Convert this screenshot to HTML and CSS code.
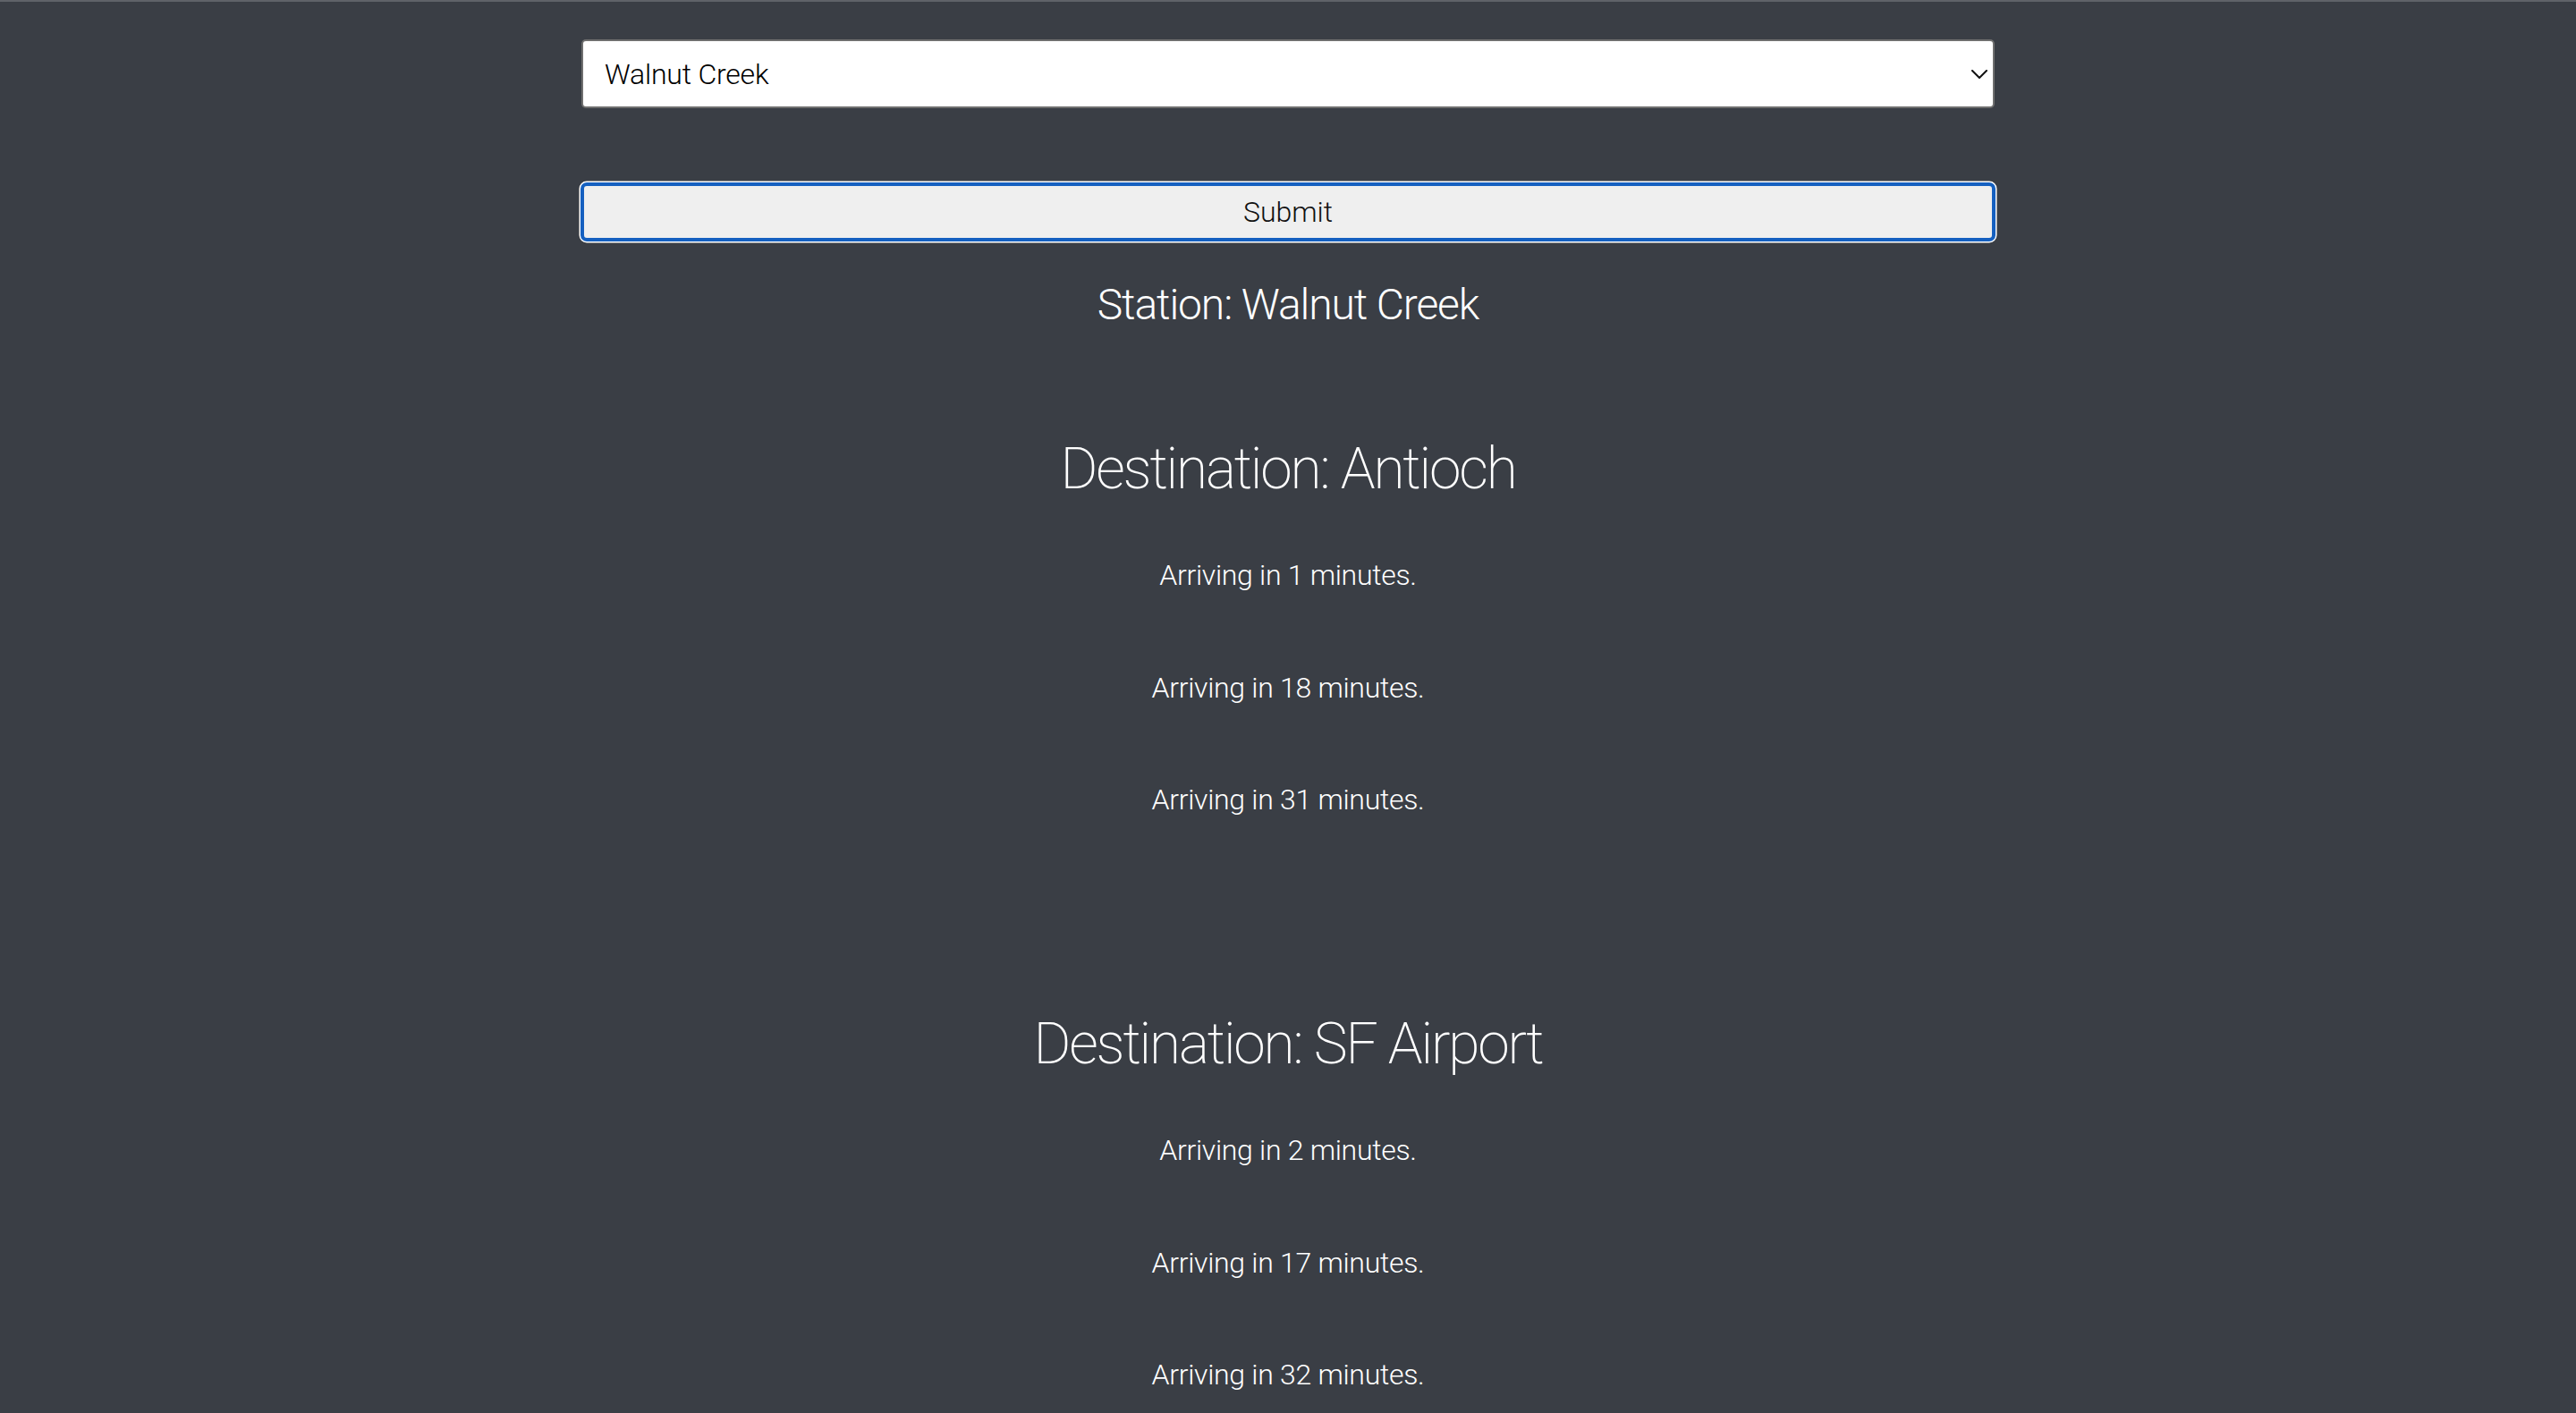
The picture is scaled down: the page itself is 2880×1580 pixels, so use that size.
FILE: index.html
```html
<!DOCTYPE html>
<html lang="en">
<head>
<meta charset="utf-8">
<title>BART Departures</title>
<link rel="stylesheet" href="styles.css">
</head>
<body>
<div class="page">
  <form class="picker">
    <div class="select-wrap">
      <select class="station-select">
        <option>Walnut Creek</option>
      </select>
      <svg class="chevron" width="18" height="10" viewBox="0 0 18 10" aria-hidden="true">
        <path d="M1 1 L9 9 L17 1" fill="none" stroke="#111" stroke-width="2" stroke-linecap="round" stroke-linejoin="round"/>
      </svg>
    </div>
    <button type="button" class="submit">Submit</button>
  </form>

  <h2 class="station">Station: Walnut Creek</h2>

  <div class="results">
    <section class="dest">
      <h1 class="dest-title">Destination: Antioch</h1>
      <div class="arrivals">
        <p class="arrival">Arriving in 1 minutes.</p>
        <p class="arrival">Arriving in 18 minutes.</p>
        <p class="arrival">Arriving in 31 minutes.</p>
      </div>
    </section>
    <section class="dest">
      <h1 class="dest-title">Destination: SF Airport</h1>
      <div class="arrivals">
        <p class="arrival">Arriving in 2 minutes.</p>
        <p class="arrival">Arriving in 17 minutes.</p>
        <p class="arrival">Arriving in 32 minutes.</p>
      </div>
    </section>
  </div>
</div>
</body>
</html>
```
FILE: styles.css
```css
html, body {
  margin: 0;
  padding: 0;
  background: #3a3e45;
}

body {
  font-family: Roboto, "Liberation Sans", sans-serif;
  color: #ffffff;
  border-top: 2px solid #5f6268;
}

.page {
  width: 1580px;
  margin: 0 auto;
  padding-top: 42px;
  display: flex;
  flex-direction: column;
}

.picker {
  display: flex;
  flex-direction: column;
  gap: 84px;
}

.select-wrap {
  position: relative;
}

.station-select {
  appearance: none;
  -webkit-appearance: none;
  display: block;
  width: 100%;
  height: 77px;
  box-sizing: border-box;
  margin: 0;
  padding: 0 60px 0 24px;
  background: #ffffff;
  border: 2px solid #6f6f6f;
  border-radius: 5px;
  font-family: Roboto, "Liberation Sans", sans-serif;
  font-weight: 300;
  font-size: 32px;
  letter-spacing: -0.2px;
  color: #000000;
  outline: none;
}

.chevron {
  position: absolute;
  right: 8px;
  top: 34px;
  pointer-events: none;
}

.submit {
  display: block;
  width: 100%;
  height: 64px;
  box-sizing: border-box;
  margin: 0;
  padding: 0;
  background: #efefef;
  border: 3px solid #1560c0;
  border-radius: 6px;
  box-shadow: 0 0 0 1px #1560c0, 0 0 0 2.5px #ffffff;
  font-family: Roboto, "Liberation Sans", sans-serif;
  font-weight: 300;
  font-size: 32px;
  color: #111111;
  cursor: pointer;
}

.station {
  margin: 44px 0 0;
  font-size: 48px;
  line-height: 56px;
  font-weight: 300;
  letter-spacing: -1.1px;
  text-align: center;
}

.results {
  margin-top: 118px;
  display: flex;
  flex-direction: column;
  gap: 216px;
}

.dest {
  display: flex;
  flex-direction: column;
  align-items: center;
  gap: 60px;
}

.dest-title {
  margin: 0;
  font-size: 64px;
  line-height: 76px;
  font-weight: 200;
  letter-spacing: -2.2px;
  text-align: center;
}

.arrivals {
  display: flex;
  flex-direction: column;
  align-items: center;
  gap: 85.5px;
}

.arrival {
  margin: 0;
  font-size: 32px;
  line-height: 40px;
  font-weight: 300;
  letter-spacing: -0.3px;
}
```
